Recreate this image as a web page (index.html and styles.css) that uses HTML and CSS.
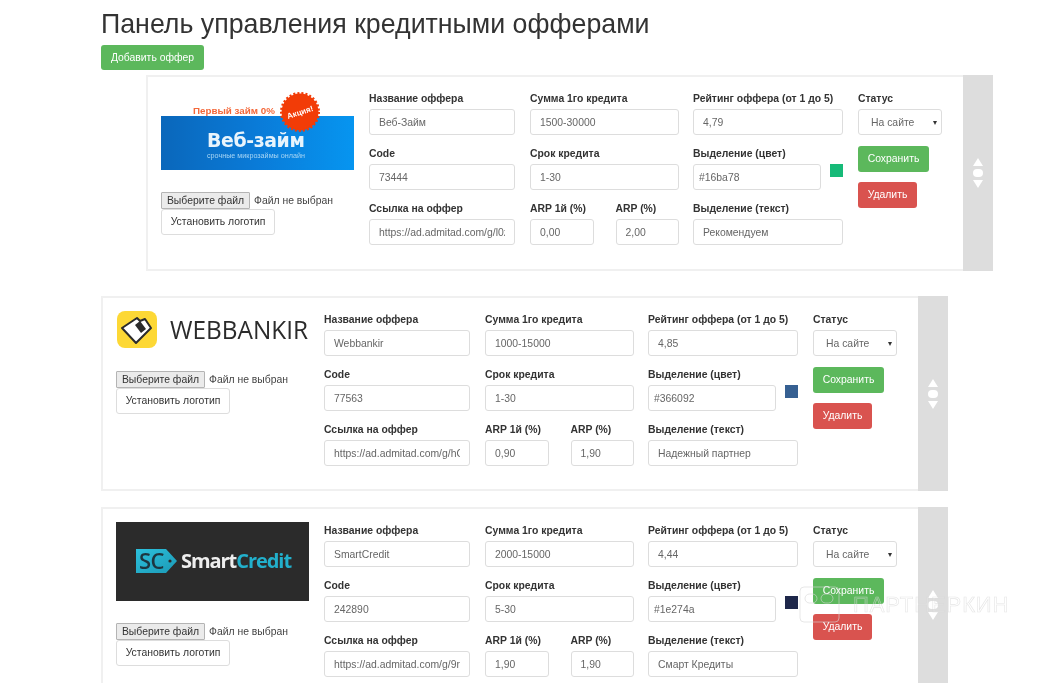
FILE: index.html
```html
<!DOCTYPE html>
<html lang="ru">
<head>
<meta charset="utf-8">
<title>Панель управления кредитными офферами</title>
<link rel="stylesheet" href="styles.css">
</head>
<body>
<main class="page">
  <h1 class="title">Панель управления кредитными офферами</h1>
  <button class="btn btn-green btn-add" type="button">Добавить оффер</button>

  <section class="card card-shifted">
    <div class="card-body">
      <div class="logo-col">
        <svg class="logo" width="193" height="80" viewBox="0 0 193 80">
          <defs><linearGradient id="webz" x1="0" x2="1" y1="0" y2="0"><stop offset="0" stop-color="#0a67bb"/><stop offset=".5" stop-color="#0a7bd8"/><stop offset="1" stop-color="#0695f0"/></linearGradient></defs>
          <rect x="0" y="26" width="193" height="54" fill="url(#webz)"/>
          <text x="32" y="24" class="wz-red">Первый займ 0%</text>
          <circle cx="139" cy="22" r="18.5" fill="#f23c07" stroke="#f23c07" stroke-width="3" stroke-dasharray="2 2"/>
          <text x="139" y="25" class="wz-badge" transform="rotate(-18 139 22)">Акция!</text>
          <text x="46" y="57" class="wz-name">Веб-займ</text>
          <text x="46" y="68" class="wz-sub">срочные микрозаймы онлайн</text>
        </svg>
        <div class="file-row"><button class="file-btn" type="button">Выберите файл</button><span class="file-name">Файл не выбран</span></div>
        <button class="btn btn-default" type="button">Установить логотип</button>
      </div>
      <div class="col col-a">
        <div class="field"><label class="label">Название оффера</label><input class="input" value="Веб-Займ"></div>
        <div class="field"><label class="label">Code</label><input class="input" value="73444"></div>
        <div class="field"><label class="label">Ссылка на оффер</label><input class="input" value="https://ad.admitad.com/g/l0zk7xq"></div>
      </div>
      <div class="col col-b">
        <div class="field"><label class="label">Сумма 1го кредита</label><input class="input" value="1500-30000"></div>
        <div class="field"><label class="label">Срок кредита</label><input class="input" value="1-30"></div>
        <div class="pair">
          <div class="field field-small"><label class="label">ARP 1й (%)</label><input class="input" value="0,00"></div>
          <div class="field field-small"><label class="label">ARP (%)</label><input class="input" value="2,00"></div>
        </div>
      </div>
      <div class="col col-c">
        <div class="field"><label class="label">Рейтинг оффера (от 1 до 5)</label><input class="input" value="4,79"></div>
        <div class="field"><label class="label">Выделение (цвет)</label><div class="color-row"><input class="input input-color" value="#16ba78"><span class="swatch" style="background:#16ba78"></span></div></div>
        <div class="field"><label class="label">Выделение (текст)</label><input class="input" value="Рекомендуем"></div>
      </div>
      <div class="actions">
        <label class="label">Статус</label>
        <div class="select-wrap"><select class="select"><option>На сайте</option></select></div>
        <button class="btn btn-green btn-save" type="button">Сохранить</button>
        <button class="btn btn-red btn-delete" type="button">Удалить</button>
      </div>
    </div>
    <div class="handle"><svg width="10" height="30" viewBox="0 0 10 30"><path d="M5 0l5 8H0z" fill="#fff"/><rect y="11" width="10" height="8" rx="4" fill="#fff"/><path d="M5 30l5-8H0z" fill="#fff"/></svg></div>
  </section>

  <section class="card card-gap">
    <div class="card-body">
      <div class="logo-col">
        <svg class="logo" width="193" height="38" viewBox="0 0 193 38">
          <rect x="1" y="0" width="40" height="37" rx="8" fill="#fdd835"/>
          <path d="M6 17L21 7l3 3 5-2 6 9-15 15z" fill="#fff" stroke="#2b2b2b" stroke-width="2" stroke-linejoin="round"/>
          <path d="M24 10l6 8-5 4-6-8z" fill="#2b2b2b"/>
          <text x="54" y="28" class="wb-name" textLength="138" lengthAdjust="spacingAndGlyphs">WEBBANKIR</text>
        </svg>
        <div class="file-row"><button class="file-btn" type="button">Выберите файл</button><span class="file-name">Файл не выбран</span></div>
        <button class="btn btn-default" type="button">Установить логотип</button>
      </div>
      <div class="col col-a">
        <div class="field"><label class="label">Название оффера</label><input class="input" value="Webbankir"></div>
        <div class="field"><label class="label">Code</label><input class="input" value="77563"></div>
        <div class="field"><label class="label">Ссылка на оффер</label><input class="input" value="https://ad.admitad.com/g/hOqs2a"></div>
      </div>
      <div class="col col-b">
        <div class="field"><label class="label">Сумма 1го кредита</label><input class="input" value="1000-15000"></div>
        <div class="field"><label class="label">Срок кредита</label><input class="input" value="1-30"></div>
        <div class="pair">
          <div class="field field-small"><label class="label">ARP 1й (%)</label><input class="input" value="0,90"></div>
          <div class="field field-small"><label class="label">ARP (%)</label><input class="input" value="1,90"></div>
        </div>
      </div>
      <div class="col col-c">
        <div class="field"><label class="label">Рейтинг оффера (от 1 до 5)</label><input class="input" value="4,85"></div>
        <div class="field"><label class="label">Выделение (цвет)</label><div class="color-row"><input class="input input-color" value="#366092"><span class="swatch" style="background:#366092"></span></div></div>
        <div class="field"><label class="label">Выделение (текст)</label><input class="input" value="Надежный партнер"></div>
      </div>
      <div class="actions">
        <label class="label">Статус</label>
        <div class="select-wrap"><select class="select"><option>На сайте</option></select></div>
        <button class="btn btn-green btn-save" type="button">Сохранить</button>
        <button class="btn btn-red btn-delete" type="button">Удалить</button>
      </div>
    </div>
    <div class="handle"><svg width="10" height="30" viewBox="0 0 10 30"><path d="M5 0l5 8H0z" fill="#fff"/><rect y="11" width="10" height="8" rx="4" fill="#fff"/><path d="M5 30l5-8H0z" fill="#fff"/></svg></div>
  </section>

  <section class="card">
    <div class="card-body">
      <div class="logo-col">
        <svg class="logo" width="193" height="79" viewBox="0 0 193 79">
          <defs><linearGradient id="sct" x1="0" x2="1" y1="0" y2="1"><stop offset="0" stop-color="#2cc0dc"/><stop offset="1" stop-color="#1c9ab6"/></linearGradient></defs>
          <rect width="193" height="79" fill="#2b2b2b"/>
          <path d="M20 27h30l11 12-11 12H20z" fill="url(#sct)"/>
          <circle cx="54" cy="39" r="1.6" fill="#2b2b2b"/>
          <text x="23" y="47" class="sc-tag">SC</text>
          <text x="65" y="46" class="sc-name">Smart<tspan class="sc-accent">Credit</tspan></text>
        </svg>
        <div class="file-row"><button class="file-btn" type="button">Выберите файл</button><span class="file-name">Файл не выбран</span></div>
        <button class="btn btn-default" type="button">Установить логотип</button>
      </div>
      <div class="col col-a">
        <div class="field"><label class="label">Название оффера</label><input class="input" value="SmartCredit"></div>
        <div class="field"><label class="label">Code</label><input class="input" value="242890"></div>
        <div class="field"><label class="label">Ссылка на оффер</label><input class="input" value="https://ad.admitad.com/g/9rtk4c"></div>
      </div>
      <div class="col col-b">
        <div class="field"><label class="label">Сумма 1го кредита</label><input class="input" value="2000-15000"></div>
        <div class="field"><label class="label">Срок кредита</label><input class="input" value="5-30"></div>
        <div class="pair">
          <div class="field field-small"><label class="label">ARP 1й (%)</label><input class="input" value="1,90"></div>
          <div class="field field-small"><label class="label">ARP (%)</label><input class="input" value="1,90"></div>
        </div>
      </div>
      <div class="col col-c">
        <div class="field"><label class="label">Рейтинг оффера (от 1 до 5)</label><input class="input" value="4,44"></div>
        <div class="field"><label class="label">Выделение (цвет)</label><div class="color-row"><input class="input input-color" value="#1e274a"><span class="swatch" style="background:#1e274a"></span></div></div>
        <div class="field"><label class="label">Выделение (текст)</label><input class="input" value="Смарт Кредиты"></div>
      </div>
      <div class="actions">
        <label class="label">Статус</label>
        <div class="select-wrap"><select class="select"><option>На сайте</option></select></div>
        <button class="btn btn-green btn-save" type="button">Сохранить</button>
        <button class="btn btn-red btn-delete" type="button">Удалить</button>
      </div>
    </div>
    <div class="handle"><svg width="10" height="30" viewBox="0 0 10 30"><path d="M5 0l5 8H0z" fill="#fff"/><rect y="11" width="10" height="8" rx="4" fill="#fff"/><path d="M5 30l5-8H0z" fill="#fff"/></svg></div>
  </section>
</main>

<div class="watermark">
  <svg width="42" height="38" viewBox="0 0 42 38" fill="none" stroke="rgba(215,215,215,.6)" stroke-width="1"><rect x="1" y="1" width="39" height="35" rx="4"/><rect x="6" y="8" width="12" height="9" rx="4.5"/><rect x="22" y="8" width="12" height="9" rx="4.5"/></svg>
  <span class="watermark-text">ПАРТНЕРКИН</span>
</div>
</body>
</html>
```

FILE: styles.css
```css
* { box-sizing: border-box; }

html, body {
  margin: 0;
  height: 683px;
  overflow: hidden;
  background: #fff;
}

body {
  position: relative;
  font-family: "Liberation Sans", Arial, sans-serif;
  font-size: 10.4px;
  color: #333;
  filter: blur(0.5px);
}

.page {
  padding: 9px 0 0 101px;
  width: 1060px;
}

.title {
  margin: 0 0 6px;
  font-size: 26.75px;
  font-weight: 400;
  line-height: 30px;
  color: #333;
}

.btn {
  display: block;
  height: 26px;
  padding: 0;
  border: 0;
  border-radius: 3px;
  font: inherit;
  line-height: 26px;
  white-space: nowrap;
}

.btn-green { background: #5cb85c; color: #fff; }
.btn-red { background: #d9534f; color: #fff; }
.btn-default { background: #fff; border: 1px solid #ddd; line-height: 24px; color: #333; width: 114px; }

.btn-add { width: 103px; height: 25px; line-height: 25px; margin-bottom: 5px; }
.btn-save { width: 71px; margin-top: 11px; }
.btn-delete { width: 59px; margin-top: 10px; }

.card {
  display: flex;
  width: 847px;
  height: 196px;
  margin-bottom: 16px;
}

.card-shifted { margin-left: 45px; margin-bottom: 25px; }

.card-gap { height: 195px; }

.card-body {
  flex: 1;
  display: flex;
  padding: 13px 0 0 13px;
  border: 2px solid #f0f0f0;
  border-right: 0;
}

.handle {
  flex: none;
  width: 30px;
  display: flex;
  align-items: center;
  justify-content: center;
  background: #ddd;
}

.logo-col { width: 193px; margin-right: 15px; }

.logo { display: block; margin-bottom: 22px; overflow: visible; }

.file-row {
  display: flex;
  align-items: center;
  height: 17px;
  white-space: nowrap;
}

.file-btn {
  width: 89px;
  height: 17px;
  padding: 0;
  margin-right: 4px;
  border: 1px solid #b4b4b4;
  border-radius: 1px;
  background: #ebebeb;
  font: inherit;
  color: #333;
}

.file-name { color: #444; }

.col { display: flex; flex-direction: column; gap: 13px; padding-top: 3px; }

.col-a { width: 146px; margin-right: 15px; }
.col-b { width: 149px; margin-right: 14px; }
.col-c { width: 150px; margin-right: 15px; }

.field { display: flex; flex-direction: column; }

.label {
  display: block;
  height: 12px;
  margin-bottom: 4px;
  font-weight: 700;
  line-height: 12px;
  white-space: nowrap;
}

.input {
  display: block;
  width: 100%;
  height: 26px;
  padding: 0 9px;
  border: 1px solid #ddd;
  border-radius: 3px;
  background: #fff;
  font: inherit;
  color: #666;
}

.pair { display: flex; gap: 22px; }

.field-small { width: 63.5px; }

.color-row { display: flex; align-items: flex-start; justify-content: space-between; }

.input-color { width: 128px; padding: 0 5px; }

.swatch { display: block; width: 13px; height: 13px; }

.actions { width: 84px; padding-top: 3px; }

.select-wrap { position: relative; width: 84px; }

.select-wrap::after {
  content: "";
  position: absolute;
  right: 5px;
  top: 11.5px;
  border-style: solid;
  border-width: 4px 2.5px 0;
  border-color: #333 transparent transparent;
}

.select {
  display: block;
  width: 84px;
  height: 26px;
  padding: 0 0 0 12px;
  border: 1px solid #ddd;
  border-radius: 3px;
  background: #fff;
  appearance: none;
  font: inherit;
  color: #666;
}

/* logo text */
.wz-red { font: 700 9.8px "Liberation Sans", sans-serif; fill: #f4683a; }
.wz-badge { font: 700 8px "Liberation Sans", sans-serif; fill: #fff; text-anchor: middle; }
.wz-name { font: 700 18.9px "DejaVu Sans", sans-serif; fill: #e8f4fc; letter-spacing: -.4px; }
.wz-sub { font: 400 7.2px "Liberation Sans", sans-serif; fill: #a6d5f4; }
.wb-name { font: 400 25px "Open Sans", sans-serif; fill: #2b2b2b; }
.sc-tag { font: 600 22px "Open Sans", sans-serif; fill: #1d3640; letter-spacing: -.5px; }
.sc-name { font: 700 20px "Open Sans", sans-serif; fill: #eee; letter-spacing: -1.05px; }
.sc-accent { fill: #22b0cc; }

.watermark {
  position: absolute;
  left: 799px;
  top: 586px;
  display: flex;
  align-items: center;
  gap: 12px;
  pointer-events: none;
}

.watermark-text {
  font-size: 22px;
  letter-spacing: .9px;
  color: rgba(255, 255, 255, .1);
  -webkit-text-stroke: .6px rgba(215, 215, 215, .65);
}
```
